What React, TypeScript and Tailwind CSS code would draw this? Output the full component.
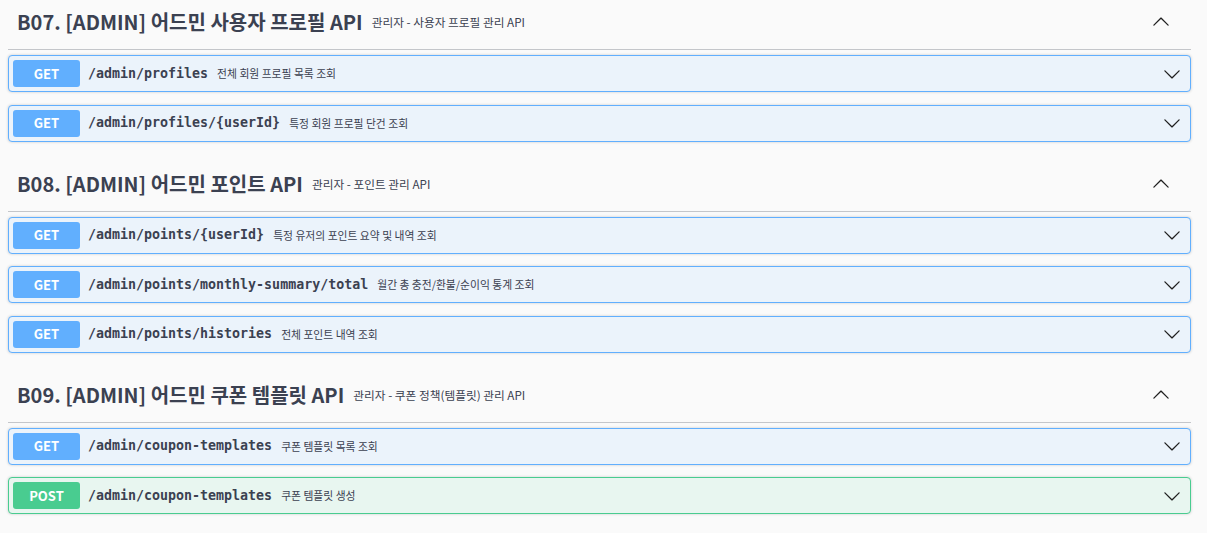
const sections = [
  {
    code: "B07. [ADMIN] 어드민 사용자 프로필 API",
    desc: "관리자 - 사용자 프로필 관리 API",
    ops: [
      { method: "GET", path: "/admin/profiles", summary: "전체 회원 프로필 목록 조회" },
      { method: "GET", path: "/admin/profiles/{userId}", summary: "특정 회원 프로필 단건 조회" },
    ],
  },
  {
    code: "B08. [ADMIN] 어드민 포인트 API",
    desc: "관리자 - 포인트 관리 API",
    ops: [
      { method: "GET", path: "/admin/points/{userId}", summary: "특정 유저의 포인트 요약 및 내역 조회" },
      { method: "GET", path: "/admin/points/monthly-summary/total", summary: "월간 총 충전/환불/순이익 통계 조회" },
      { method: "GET", path: "/admin/points/histories", summary: "전체 포인트 내역 조회" },
    ],
  },
  {
    code: "B09. [ADMIN] 어드민 쿠폰 템플릿 API",
    desc: "관리자 - 쿠폰 정책(템플릿) 관리 API",
    ops: [
      { method: "GET", path: "/admin/coupon-templates", summary: "쿠폰 템플릿 목록 조회" },
      { method: "POST", path: "/admin/coupon-templates", summary: "쿠폰 템플릿 생성" },
    ],
  },
];

const Arrow = ({ up = false }: { up?: boolean }) => (
  <svg width="18" height="18" viewBox="0 0 20 20" className={up ? "rotate-180" : ""} fill="#1f1f1f">
    <path d="M17.418 6.109c.272-.268.709-.268.979 0s.271.701 0 .969l-7.908 7.83c-.27.268-.707.268-.979 0l-7.908-7.83c-.27-.268-.27-.701 0-.969.271-.268.709-.268.979 0L10 13.25l7.418-7.141z" />
  </svg>
);

const sans = "font-['Noto_Sans_CJK_KR','Noto_Sans',sans-serif]";

export default function App() {
  return (
    <div className={`min-h-[533px] bg-[#fafafa] pl-[8px] pr-[16px] text-[#3b4151] ${sans}`}>
      {sections.map((section) => (
        <div key={section.code} className="mb-[20px]">
          {/* Tag header */}
          <div className="flex h-[50px] items-center border-b border-[#c4c6ca] pl-[9px] pr-[21px] pb-[5px]">
            <h3 className="text-[20px] font-bold leading-none">{section.code}</h3>
            <span className="ml-[9px] text-[11.7px] leading-none">{section.desc}</span>
            <div className="ml-auto">
              <Arrow up />
            </div>
          </div>

          {/* Operations */}
          <div className="mt-[5px] flex flex-col gap-[12.5px]">
            {section.ops.map((op) => {
              const post = op.method === "POST";
              return (
                <div
                  key={op.method + op.path}
                  className={`flex h-[37px] items-center rounded-[4px] border pl-[4px] pr-[9px] shadow-[0_0_3px_rgba(0,0,0,0.19)] ${
                    post ? "border-[#49cc90] bg-[#e8f6f0]" : "border-[#61affe] bg-[#ebf3fb]"
                  }`}
                >
                  <div
                    className={`flex h-[27px] w-[67px] items-center justify-center rounded-[3px] text-[13px] font-bold text-white ${
                      post ? "bg-[#49cc90]" : "bg-[#61affe]"
                    }`}
                  >
                    {op.method}
                  </div>
                  <span className="ml-[8px] font-['DejaVu_Sans_Mono',monospace] text-[13.3px] font-bold">
                    {op.path}
                  </span>
                  <span className="ml-[9px] text-[10.8px]">{op.summary}</span>
                  <div className="ml-auto">
                    <Arrow />
                  </div>
                </div>
              );
            })}
          </div>
        </div>
      ))}
    </div>
  );
}
